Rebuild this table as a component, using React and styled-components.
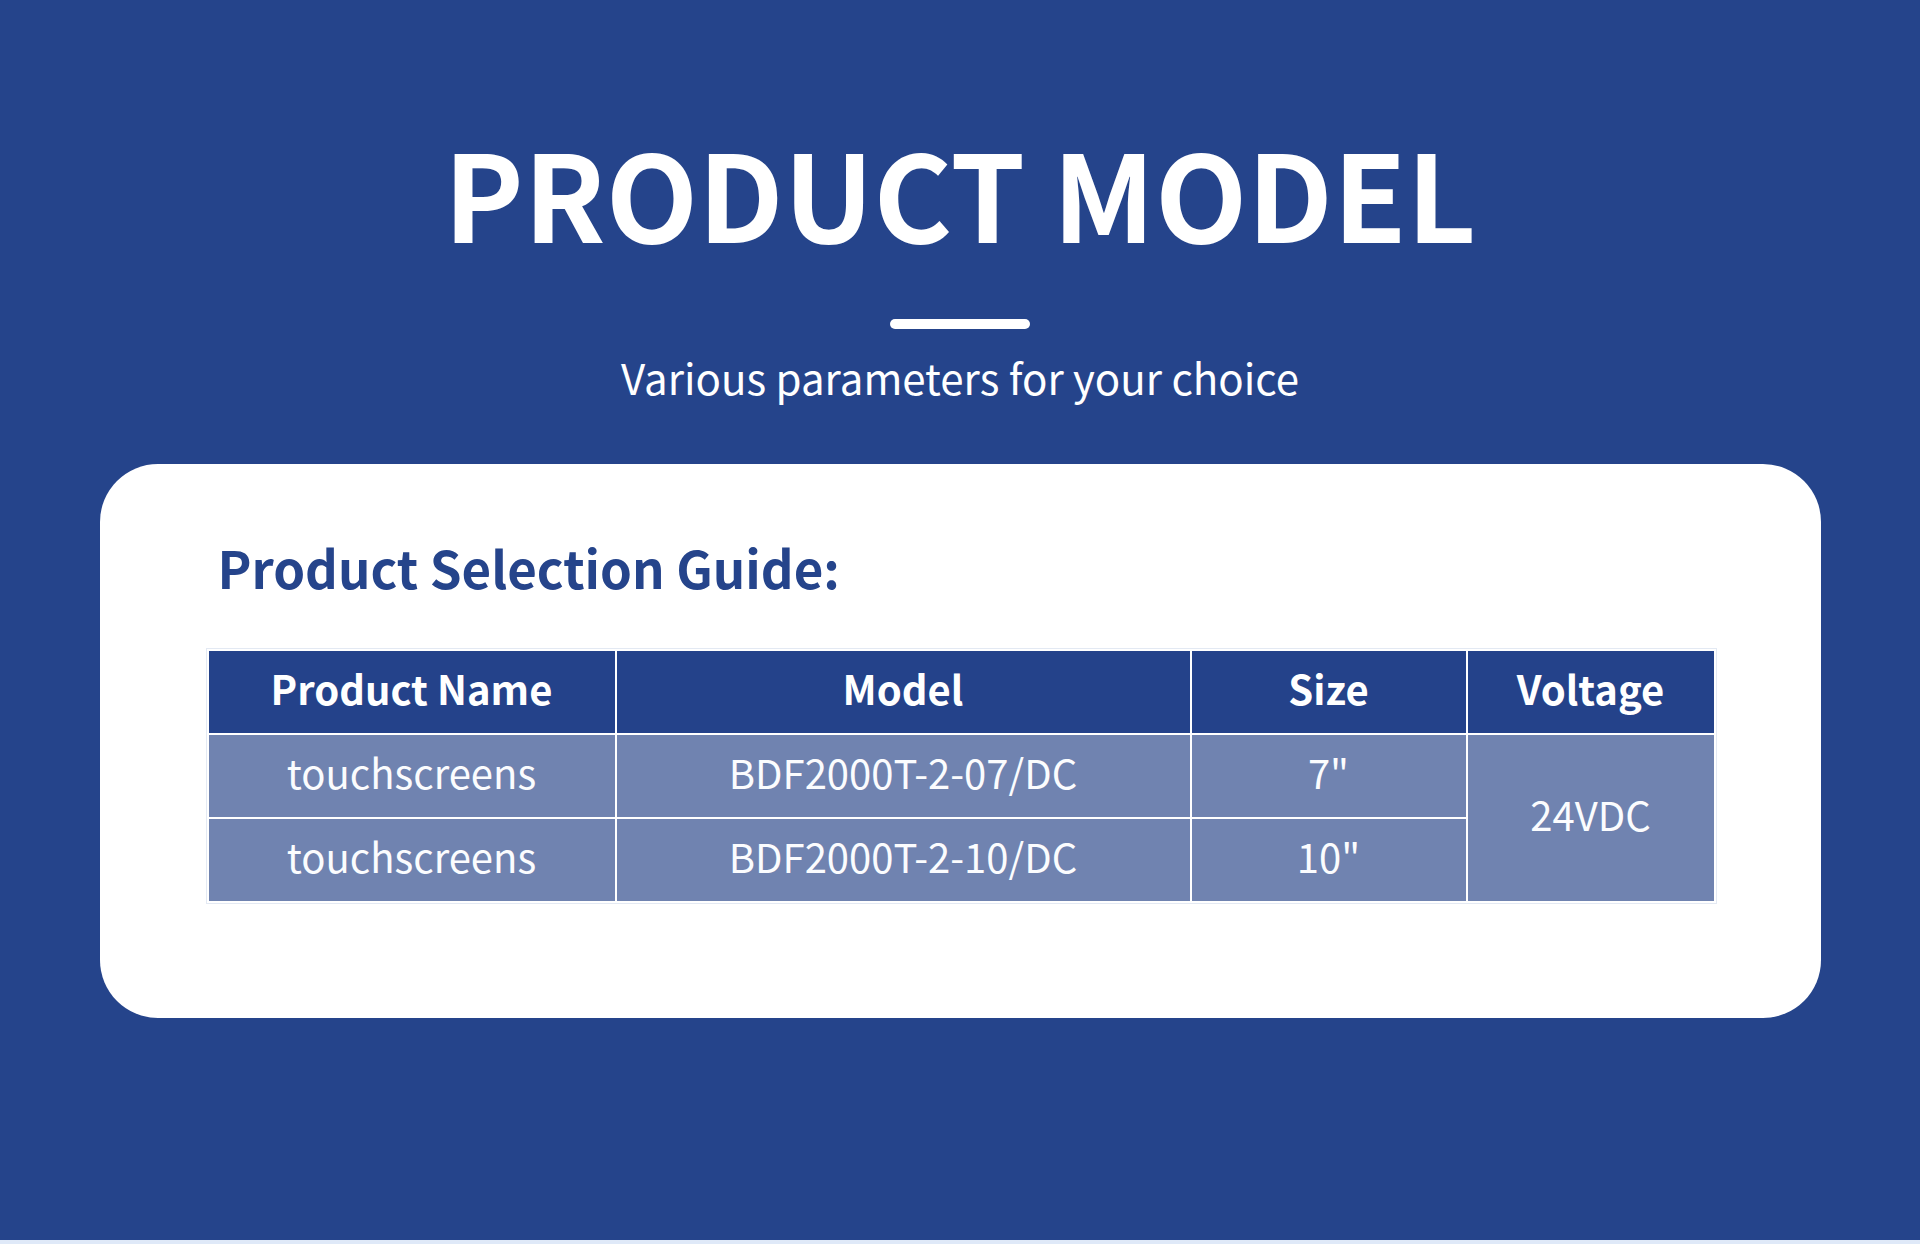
import React from 'react';
import styled, { createGlobalStyle } from 'styled-components';

const GlobalStyle = createGlobalStyle`
  html, body {
    margin: 0;
    padding: 0;
    background: #dfe9f8;
  }
  body {
    font-family: "Noto Sans CJK SC", "Noto Sans", sans-serif;
  }
`

const Section = styled.section`
  height: 1240px;
  background: #25448b;
  display: flex;
  flex-direction: column;
  align-items: center;
  padding-top: 131px;
  box-sizing: border-box;
`

const Title = styled.h1`
  margin: 0;
  font-size: 120px;
  line-height: 1;
  font-weight: 700;
  color: #fff;
`

const Divider = styled.div`
  width: 140px;
  height: 10px;
  border-radius: 5px;
  background: #fff;
  margin-top: 68px;
`

const Subtitle = styled.p`
  margin: 27px 0 0;
  font-size: 42px;
  line-height: 1;
  font-weight: 400;
  color: #fff;
`

const Card = styled.div`
  width: 1721px;
  height: 554px;
  margin-top: 66px;
  box-sizing: border-box;
  padding: 78px 106px 0 107px;
  background: #fff;
  border-radius: 58px;
`

const CardHeading = styled.h2`
  margin: 0 0 56px 11px;
  font-size: 51px;
  line-height: 1;
  font-weight: 700;
  color: #25448b;
`

const Table = styled.table`
  width: 1507px;
  border-collapse: collapse;
  table-layout: fixed;
  outline: 1px solid #e3e9f3;
`

const HeadCell = styled.th`
  height: 84px;
  padding: 0 0 9px;
  box-sizing: border-box;
  background: #24428a;
  color: #fff;
  font-size: 40px;
  font-weight: 700;
  border: 2px solid #fff;
  text-align: center;
`

const Cell = styled.td`
  height: 84px;
  padding: 0 0 9px;
  box-sizing: border-box;
  background: #7083b0;
  color: #fbfcfe;
  font-size: 40px;
  font-weight: 400;
  border: 2px solid #fff;
  text-align: center;
`

const columns = [
  { label: 'Product Name', width: 408 },
  { label: 'Model', width: 575 },
  { label: 'Size', width: 276 },
  { label: 'Voltage', width: 248 },
];

const rows = [
  { name: 'touchscreens', model: 'BDF2000T-2-07/DC', size: '7"' },
  { name: 'touchscreens', model: 'BDF2000T-2-10/DC', size: '10"' },
];

const App = () => {
  return (
    <>
      <GlobalStyle />
      <Section>
        <Title>PRODUCT MODEL</Title>
        <Divider />
        <Subtitle>Various parameters for your choice</Subtitle>
        <Card>
          <CardHeading>Product Selection Guide:</CardHeading>
          <Table>
            <colgroup>
              {columns.map(c => <col key={c.label} style={{ width: c.width }} />)}
            </colgroup>
            <thead>
              <tr>
                {columns.map(c => <HeadCell key={c.label}>{c.label}</HeadCell>)}
              </tr>
            </thead>
            <tbody>
              {rows.map((r, i) => (
                <tr key={r.model}>
                  <Cell>{r.name}</Cell>
                  <Cell>{r.model}</Cell>
                  <Cell>{r.size}</Cell>
                  {i === 0 && <Cell rowSpan={rows.length}>24VDC</Cell>}
                </tr>
              ))}
            </tbody>
          </Table>
        </Card>
      </Section>
    </>
  )
}

export default App;
